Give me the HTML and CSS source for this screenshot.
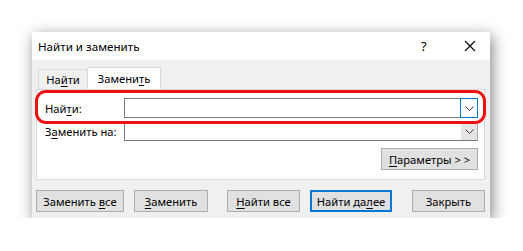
FILE: index.html
```html
<!DOCTYPE html>
<html lang="ru">
<head>
    <meta charset="UTF-8">
    <title>Найти и заменить</title>
    <link rel="stylesheet" href="styles.css">
</head>
<body>
    <div class="dialog">
        <div class="titlebar">
            <span class="title">Найти и заменить</span>
            <span class="help">?</span>
            <span class="close">
                <svg width="12" height="12" viewBox="0 0 12 12"><path d="M1 1L11 11M11 1L1 11" stroke="#000" stroke-width="1.1"/></svg>
            </span>
        </div>
        <div class="body">
            <div class="tabs">
                <div class="tab">На<u>й</u>ти</div>
                <div class="tab active">Замени<u>т</u>ь</div>
            </div>
            <div class="panel">
                <div class="highlight"></div>
                <div class="row">
                    <label>Най<u>т</u>и:</label>
                    <div class="combo focus">
                        <span class="arrow"><svg width="9" height="5" viewBox="0 0 9 5"><path d="M0.5 0.5L4.5 4.5L8.5 0.5" fill="none" stroke="#5c2b4a"/></svg></span>
                    </div>
                </div>
                <div class="row">
                    <label>З<u>а</u>менить на:</label>
                    <div class="combo">
                        <span class="arrow"><svg width="9" height="5" viewBox="0 0 9 5"><path d="M0.5 0.5L4.5 4.5L8.5 0.5" fill="none" stroke="#5c2b4a"/></svg></span>
                    </div>
                </div>
                <div class="params">
                    <button class="btn"><u>П</u>араметры &gt; &gt;</button>
                </div>
            </div>
            <div class="actions">
                <button class="btn w88">Заменить <u>в</u>се</button>
                <button class="btn w74"><u>З</u>аменить</button>
                <button class="btn w73 gapl"><u>Н</u>айти все</button>
                <button class="btn w82 default">Найти да<u>л</u>ее</button>
                <button class="btn w73 gapl2">Закрыть</button>
            </div>
        </div>
    </div>
</body>
</html>
```

FILE: styles.css
```css
body {
    margin: 0;
    background: #fff;
    font-family: "Noto Sans", "Open Sans", sans-serif;
    font-size: 11.2px;
    color: #000;
}
u {
    text-decoration-thickness: 1px;
    text-underline-offset: 2px;
}
.dialog {
    margin: 32px 0 0 32px;
    width: 458px;
    height: 186px;
    background: #f0f0f0;
    box-shadow: 2px 4px 14px rgba(0, 0, 0, 0.5);
}
.titlebar {
    height: 28px;
    background: #fff;
    display: flex;
    align-items: center;
    padding-left: 6px;
    font-size: 11.6px;
}
.title {
    flex: 1;
}
.help {
    width: 14px;
    margin-right: 29px;
    font-size: 13px;
}
.close {
    width: 12px;
    margin-right: 14px;
    display: flex;
}
.body {
    padding: 6px 5px 0 4px;
}
.tabs {
    display: flex;
    align-items: flex-end;
    height: 23px;
    padding-left: 2px;
}
.tab {
    height: 20px;
    line-height: 20px;
    text-align: center;
    border: 1px solid #d9d9d9;
    border-bottom: none;
    background: #f0f0f0;
    box-sizing: border-box;
    width: 50px;
}
.tab.active {
    height: 23px;
    line-height: 22px;
    background: #fff;
    width: 73px;
    border-left: none;
    margin-bottom: -1px;
    position: relative;
}
.panel {
    position: relative;
    background: #fff;
    border: 1px solid #d9d9d9;
    height: 91px;
    padding: 8px 6px 0 8px;
    box-sizing: border-box;
}
.highlight {
    position: absolute;
    left: -2px;
    top: 0;
    width: 451px;
    height: 34px;
    border: 3.5px solid #ee1111;
    border-radius: 11px;
    box-sizing: border-box;
}
.row {
    display: flex;
    align-items: center;
    height: 20px;
    margin-bottom: 3px;
}
.row label {
    width: 79px;
}
.combo {
    flex: 1;
    height: 20px;
    border: 1px solid #7a7a7a;
    border-right-color: #adadad;
    box-sizing: border-box;
    background: #fff;
    display: flex;
    justify-content: flex-end;
}
.combo .arrow {
    width: 16px;
    background: #e5e5e5;
    display: flex;
    align-items: center;
    justify-content: center;
}
.combo.focus .arrow {
    background: #fff;
    border: 1px solid #0078d7;
    margin: -1px -1px -1px 0;
}
.params {
    display: flex;
    justify-content: flex-end;
    margin-top: 7px;
}
.btn {
    font: inherit;
    height: 22px;
    padding: 0;
    background: #e1e1e1;
    border: 1px solid #adadad;
    color: #000;
}
.params .btn {
    width: 97px;
}
.actions {
    display: flex;
    margin-top: 10px;
    gap: 10px;
}
.w88 { width: 88px; }
.w74 { width: 74px; }
.w73 { width: 73px; }
.w82 { width: 82px; }
.gapl { margin-left: 9px; }
.gapl2 { margin-left: 10px; }
.default {
    border: 2px solid #0078d7;
}
```
